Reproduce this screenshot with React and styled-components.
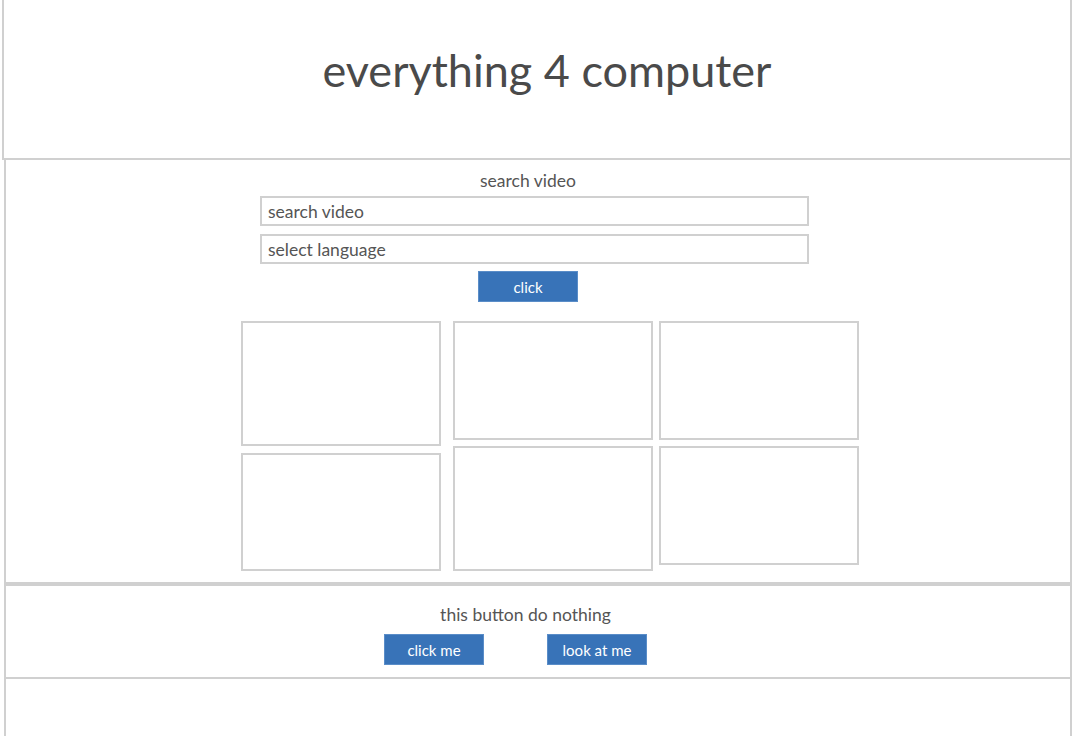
import React from "react";
import styled, { createGlobalStyle } from "styled-components";

const Global = createGlobalStyle`
  html, body { margin: 0; padding: 0; background: #fff; }
  body { font-family: Lato, "Open Sans", sans-serif; color: #555; overflow: hidden; }
`;

const Page = styled.div`
  width: 1074px;
  height: 736px;
  display: flex;
  flex-direction: column;
`;

const Header = styled.header`
  box-sizing: border-box;
  margin-left: 2px;
  width: 1070px;
  height: 160px;
  border: 2px solid #d0d0d0;
  border-top: none;
  display: flex;
  justify-content: center;
  align-items: flex-start;
`;

const Title = styled.h1`
  margin: 45px 0 0 0;
  font-weight: 400;
  font-size: 45px;
  line-height: 50px;
  color: #4a4a4a;
  padding-left: 20px;
`;

const Section = styled.section`
  box-sizing: border-box;
  margin-left: 4px;
  width: 1068px;
  height: ${(p) => p.$h}px;
  border: 2px solid #d0d0d0;
  border-top: ${(p) => (p.$top ? "2px solid #d0d0d0" : "none")};
  border-bottom: ${(p) => (p.$bottom ? "2px solid #d0d0d0" : "none")};
  display: flex;
  flex-direction: column;
  align-items: center;
  padding-top: ${(p) => p.$pt || 0}px;
`;

const Label = styled.div`
  font-size: 17.5px;
  line-height: 20px;
  color: #555;
  margin-right: ${(p) => p.$mr || 0}px;
`;

const Input = styled.input`
  box-sizing: border-box;
  width: 549px;
  height: 30px;
  border: 2px solid #d0d0d0;
  padding: 0 0 0 6px;
  font-family: Lato, sans-serif;
  font-size: 17.5px;
  color: #555;
  margin-right: 7px;
  margin-top: ${(p) => p.$mt}px;
  outline: none;
  &::placeholder { color: #555; }
`;

const Button = styled.button`
  box-sizing: border-box;
  width: 100px;
  height: 31px;
  background: #3873b8;
  border: 1px solid #5a8dc8;
  color: #fff;
  font-family: Lato, sans-serif;
  font-size: 15px;
  padding: 0;
  cursor: pointer;
`;

const SearchButton = styled(Button)`
  margin-top: 7px;
  margin-right: 20px;
`;

const Grid = styled.div`
  display: flex;
  margin-top: 19px;
  margin-left: 24px;
  align-items: flex-start;
`;

const Column = styled.div`
  display: flex;
  flex-direction: column;
  gap: ${(p) => p.$gap}px;
  margin-left: ${(p) => p.$ml || 0}px;
`;

const VideoBox = styled.div`
  box-sizing: border-box;
  width: 200px;
  height: ${(p) => p.$h}px;
  border: 2px solid #d0d0d0;
`;

const ButtonRow = styled.div`
  display: flex;
  gap: 63px;
  margin-top: 9px;
  margin-right: 45px;
`;

export default function App() {
  return (
    <>
      <Global />
      <Page>
        <Header>
          <Title>everything 4 computer</Title>
        </Header>
        <Section $h={424} $bottom $pt={11}>
          <Label $mr={20}>search video</Label>
          <Input $mt={5} placeholder="search video" />
          <Input $mt={8} placeholder="select language" />
          <SearchButton>click</SearchButton>
          <Grid>
            <Column $gap={7}>
              <VideoBox $h={125} />
              <VideoBox $h={118} />
            </Column>
            <Column $gap={6} $ml={12}>
              <VideoBox $h={119} />
              <VideoBox $h={125} />
            </Column>
            <Column $gap={6} $ml={6}>
              <VideoBox $h={119} />
              <VideoBox $h={119} />
            </Column>
          </Grid>
        </Section>
        <Section $h={95} $top $bottom $pt={19}>
          <Label $mr={25}>this button do nothing</Label>
          <ButtonRow>
            <Button>click me</Button>
            <Button>look at me</Button>
          </ButtonRow>
        </Section>
        <Section $h={57} />
      </Page>
    </>
  );
}
